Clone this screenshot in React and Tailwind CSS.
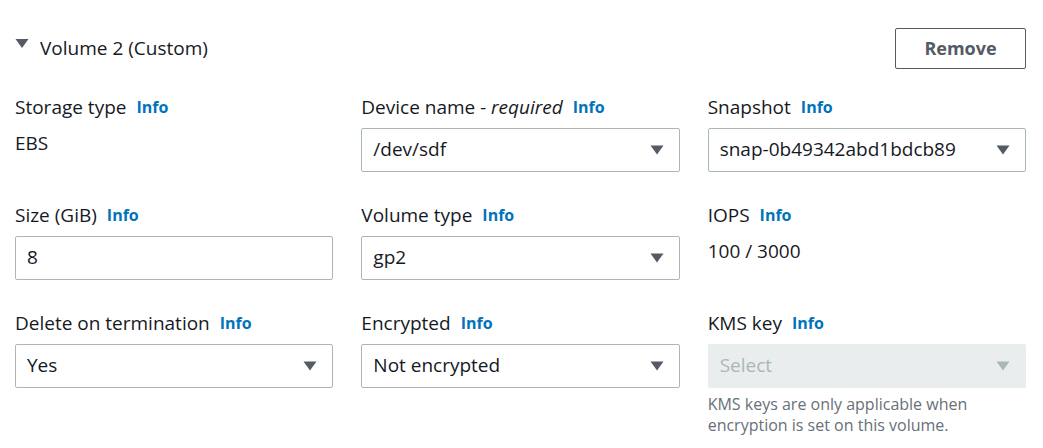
import React from "react";

const Caret = ({ className = "" }) => (
  <svg viewBox="0 0 14 10" className={className} aria-hidden="true">
    <path d="M0.5 0.5h13L7 9.5z" fill="currentColor" />
  </svg>
);

const Label = ({ children, extra }) => (
  <div className="flex h-[22px] items-center gap-[10px] text-[19px] text-[#16191f]">
    <span>
      {children}
      {extra && <i> - {extra}</i>}
    </span>
    <span className="text-[16px] font-bold text-[#0073bb]">Info</span>
  </div>
);

const Select = ({ value, disabled }) => (
  <div
    className={`flex h-[44px] items-center justify-between rounded-[2px] border pl-[11px] pr-[15px] text-[19px] ${
      disabled
        ? "border-[#eaeded] bg-[#eaeded] text-[#aab7b8]"
        : "border-[#aab7b8] bg-white text-[#16191f]"
    }`}
  >
    <span className="-mt-[2px]">{value}</span>
    <Caret className={`h-[10px] w-[14px] ${disabled ? "text-[#aab7b8]" : "text-[#545b64]"}`} />
  </div>
);

const Input = ({ value }) => (
  <div className="flex h-[44px] items-center rounded-[2px] border border-[#aab7b8] bg-white pl-[11px] text-[19px] text-[#16191f]">
    <span className="-mt-[2px]">{value}</span>
  </div>
);

const Text = ({ value }) => (
  <div className="flex h-[44px] items-start pt-[1px] text-[19px] text-[#16191f]">{value}</div>
);

const Field = ({ label, extra, children }) => (
  <div className="flex flex-col gap-[10px]">
    <Label extra={extra}>{label}</Label>
    {children}
  </div>
);

export default function App() {
  return (
    <div
      className="h-[448px] w-[1043px] overflow-hidden bg-white pl-[15px] pr-[17px]"
      style={{ fontFamily: '"Open Sans", "Noto Sans", sans-serif' }}
    >
      <div className="flex items-center justify-between pt-[28px]">
        <div className="flex items-center gap-[11px]">
          <Caret className="-mt-[10px] h-[11px] w-[14px] text-[#545b64]" />
          <span className="text-[19px] text-[#16191f]">Volume 2 (Custom)</span>
        </div>
        <button
          type="button"
          className="h-[41px] w-[131px] rounded-[2px] border border-[#545b64] bg-white text-[18px] font-bold text-[#545b64]"
        >
          Remove
        </button>
      </div>

      <div className="mt-[27px] grid grid-cols-3 gap-x-[28px] gap-y-[32px]">
        <Field label="Storage type">
          <Text value="EBS" />
        </Field>
        <Field label="Device name" extra="required">
          <Select value="/dev/sdf" />
        </Field>
        <Field label="Snapshot">
          <Select value="snap-0b49342abd1bdcb89" />
        </Field>

        <Field label="Size (GiB)">
          <Input value="8" />
        </Field>
        <Field label="Volume type">
          <Select value="gp2" />
        </Field>
        <Field label="IOPS">
          <Text value="100 / 3000" />
        </Field>

        <Field label="Delete on termination">
          <Select value="Yes" />
        </Field>
        <Field label="Encrypted">
          <Select value="Not encrypted" />
        </Field>
        <Field label="KMS key">
          <div className="flex flex-col gap-[6px]">
            <Select value="Select" disabled />
            <p className="text-[16px] leading-[21px] text-[#687078]">
              KMS keys are only applicable when
              <br />
              encryption is set on this volume.
            </p>
          </div>
        </Field>
      </div>
    </div>
  );
}
